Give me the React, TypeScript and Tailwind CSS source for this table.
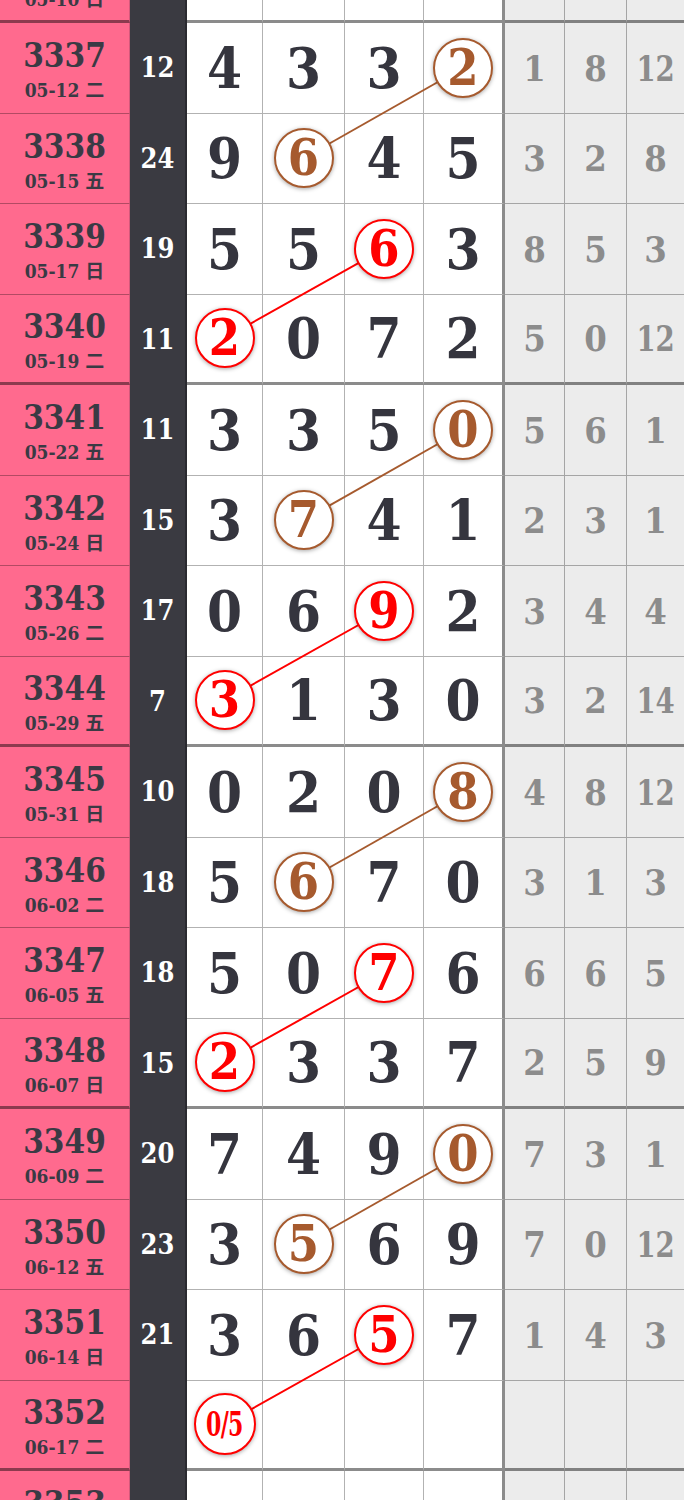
import React from 'react';

type Row = {
  no: string;
  date: string;
  sum: string;
  nums: string[];
  gray: string[];
};

const rows: Row[] = [
  { no: '3337', date: '05-12 二', sum: '12', nums: ['4', '3', '3', '2'], gray: ['1', '8', '12'] },
  { no: '3338', date: '05-15 五', sum: '24', nums: ['9', '6', '4', '5'], gray: ['3', '2', '8'] },
  { no: '3339', date: '05-17 日', sum: '19', nums: ['5', '5', '6', '3'], gray: ['8', '5', '3'] },
  { no: '3340', date: '05-19 二', sum: '11', nums: ['2', '0', '7', '2'], gray: ['5', '0', '12'] },
  { no: '3341', date: '05-22 五', sum: '11', nums: ['3', '3', '5', '0'], gray: ['5', '6', '1'] },
  { no: '3342', date: '05-24 日', sum: '15', nums: ['3', '7', '4', '1'], gray: ['2', '3', '1'] },
  { no: '3343', date: '05-26 二', sum: '17', nums: ['0', '6', '9', '2'], gray: ['3', '4', '4'] },
  { no: '3344', date: '05-29 五', sum: '7', nums: ['3', '1', '3', '0'], gray: ['3', '2', '14'] },
  { no: '3345', date: '05-31 日', sum: '10', nums: ['0', '2', '0', '8'], gray: ['4', '8', '12'] },
  { no: '3346', date: '06-02 二', sum: '18', nums: ['5', '6', '7', '0'], gray: ['3', '1', '3'] },
  { no: '3347', date: '06-05 五', sum: '18', nums: ['5', '0', '7', '6'], gray: ['6', '6', '5'] },
  { no: '3348', date: '06-07 日', sum: '15', nums: ['2', '3', '3', '7'], gray: ['2', '5', '9'] },
  { no: '3349', date: '06-09 二', sum: '20', nums: ['7', '4', '9', '0'], gray: ['7', '3', '1'] },
  { no: '3350', date: '06-12 五', sum: '23', nums: ['3', '5', '6', '9'], gray: ['7', '0', '12'] },
  { no: '3351', date: '06-14 日', sum: '21', nums: ['3', '6', '5', '7'], gray: ['1', '4', '3'] },
  { no: '3352', date: '06-17 二', sum: '', nums: ['0/5', '', '', ''], gray: ['', '', ''] },
];

// which column is circled, by position inside a group of four draws
const circleCol = [3, 1, 2, 0];
const isRed = (i: number) => i % 4 >= 2;

const ROW_H = 90.5;
const TOP = 23;
const colLeft = [187, 263, 345, 424];
const colW = [75, 81, 78, 78];
const numW = ['w-[76px]', 'w-[82px]', 'w-[79px]', 'w-[81px] border-r-[3px] border-r-black/45'];
const grayW = ['w-[60px]', 'w-[62px]', 'flex-1 border-r-0'];

const serif = "font-['DejaVu_Serif_Condensed','DejaVu_Serif','Noto_Sans_CJK_SC',serif] font-stretch-condensed";

function cx(j: number) {
  return colLeft[j] + colW[j] / 2;
}
function cy(i: number) {
  const inner = ROW_H - (i % 4 === 3 ? 3 : 1);
  return TOP + i * ROW_H + inner / 2;
}

function Circle({ text, red }: { text: string; red: boolean }) {
  const small = text.length > 1;
  return (
    <div
      className={`relative z-[2] flex items-center justify-center rounded-full border-2 bg-white shadow-[0_1px_4px_rgba(0,0,0,0.35)] ${
        red ? 'border-[#ff0000] text-[#ff0000]' : 'border-[#a65a2e] text-[#a65a2e]'
      } ${small ? 'h-[62px] w-[62px] text-[34px]' : 'h-[60px] w-[60px] text-[50px]'}`}
    >
      <span className={`leading-none ${small ? 'inline-block scale-x-[0.72] tracking-[-1px]' : ''}`}>{text}</span>
    </div>
  );
}

function TableRow({ row, index, partial }: { row: Row; index: number; partial?: 'top' | 'bottom' }) {
  const thick = partial === 'top' || index % 4 === 3;
  const b = thick ? 'border-b-[3px] border-b-black/45' : 'border-b border-b-black/30';
  const circ = partial ? -1 : circleCol[index % 4];
  return (
    <div className={`flex h-[90.5px] ${serif} font-bold`}>
      <div className={`flex w-[130px] flex-col items-center justify-center border-r border-r-[#d4587a] bg-[#ff6a8e] pt-[3px] text-[#3a3a44] ${b}`}>
        <div className="text-[33px] leading-[40px]">{row.no}</div>
        <div className="mt-[2px] text-[19px] leading-[24px]">{row.date}</div>
      </div>
      <div className="flex w-[57px] items-center justify-center border-r-2 border-r-[#2a2a30] bg-[#3a3a41] text-[27px] text-white">
        {row.sum}
      </div>
      {[0, 1, 2, 3].map((j) => (
        <div
          key={j}
          className={`flex items-center justify-center border-r border-r-black/30 bg-white text-[56px] text-[#35353e] ${numW[j]} ${b}`}
        >
          {j === circ ? <Circle text={row.nums[j]} red={isRed(index)} /> : <span className="leading-none">{row.nums[j]}</span>}
        </div>
      ))}
      {[0, 1, 2].map((j) => (
        <div
          key={j}
          className={`flex items-center justify-center border-r border-r-black/30 bg-[#ececec] text-[36px] text-[#8c8c8c] ${grayW[j]} ${b}`}
        >
          <span className={row.gray[j].length > 1 ? 'inline-block scale-x-[0.85]' : ''}>{row.gray[j]}</span>
        </div>
      ))}
    </div>
  );
}

export default function App() {
  const lines: { x1: number; y1: number; x2: number; y2: number; red: boolean }[] = [];
  for (let i = 0; i < rows.length - 1; i += 2) {
    lines.push({
      x1: cx(circleCol[i % 4]),
      y1: cy(i),
      x2: cx(circleCol[(i + 1) % 4]),
      y2: cy(i + 1),
      red: isRed(i),
    });
  }

  return (
    <div className="relative h-[1500px] w-[684px] overflow-hidden bg-white">
      <div className="-mt-[67.5px]">
        <TableRow
          row={{ no: '3336', date: '05-10 日', sum: '', nums: ['', '', '', ''], gray: ['', '', ''] }}
          index={-1}
          partial="top"
        />
        {rows.map((r, i) => (
          <TableRow key={r.no} row={r} index={i} />
        ))}
        <TableRow
          row={{ no: '3353', date: '06-19 五', sum: '', nums: ['', '', '', ''], gray: ['', '', ''] }}
          index={16}
          partial="bottom"
        />
      </div>

      {/* connector lines between circled numbers */}
      <svg className="pointer-events-none absolute left-0 top-0 z-[1]" width="684" height="1500">
        {lines.map((l, k) => (
          <line
            key={k}
            x1={l.x1}
            y1={l.y1}
            x2={l.x2}
            y2={l.y2}
            stroke={l.red ? '#ff0000' : '#a65a2e'}
            strokeWidth={2}
          />
        ))}
      </svg>
    </div>
  );
}
